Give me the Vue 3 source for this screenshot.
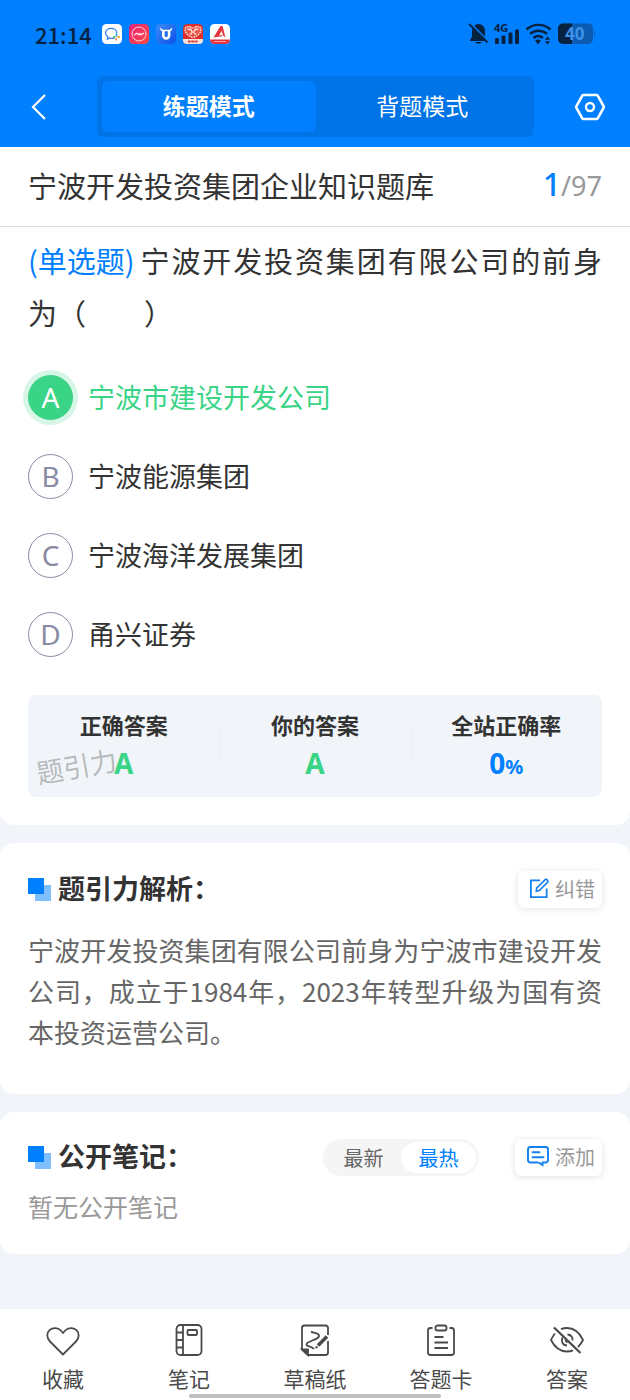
<script setup>
import { ref } from 'vue'

const mode = ref('practice')
const chosen = ref('A')
const sort = ref('hot')
const options = [
  { key: 'A', text: '宁波市建设开发公司' },
  { key: 'B', text: '宁波能源集团' },
  { key: 'C', text: '宁波海洋发展集团' },
  { key: 'D', text: '甬兴证券' },
]
</script>

<template>
  <div class="app">
    <header class="header">
      <div class="status">
        <time class="clock">21:14</time>
        <div class="apps">
          <svg viewBox="0 0 20 20" class="app-icon">
            <rect width="20" height="20" rx="4.5" fill="#fff" />
            <path d="M12.6 13.6c-1.4.8-3.3.9-4.8.4l-2.4 1.1.5-2.1C4.200 11.800 3.400 10.500 3.500 9c.2-2.700 2.600-4.600 5.600-4.600 3.200 0 5.700 2 5.800 4.700" fill="none" stroke="#2b7cf0" stroke-width="1.300" />
            <path d="M14.500 9.800v2.200" stroke="#39a8f5" stroke-width="1.700" stroke-linecap="round" />
            <path d="M16 12.800l1 .4" stroke="#f5a623" stroke-width="1.900" stroke-linecap="round" />
            <path d="M14.200 15v.6" stroke="#f0642b" stroke-width="1.700" stroke-linecap="round" />
            <path d="M11.800 12.900l.9.2" stroke="#42c04a" stroke-width="1.700" stroke-linecap="round" />
          </svg>
          <svg viewBox="0 0 20 20" class="app-icon">
            <defs>
              <linearGradient id="pink" x1="0" y1="0" x2="1" y2="1">
                <stop offset="0" stop-color="#e6257d" />
                <stop offset="1" stop-color="#ff4a3f" />
              </linearGradient>
            </defs>
            <rect width="20" height="20" rx="4.500" fill="url(#pink)" />
            <circle cx="10" cy="10" r="7" fill="none" stroke="#ffd6dc" stroke-width="1" />
            <path d="M5.500 11.200c1-2 2.600-2.200 3.600-1.200s1.500 1 2.100-.2l.6 1.100 3-1.900" fill="none" stroke="#fff" stroke-width="1.200" />
          </svg>
          <svg viewBox="0 0 20 20" class="app-icon">
            <defs>
              <linearGradient id="azure" x1="0" y1="0" x2="1" y2="1">
                <stop offset="0" stop-color="#3d8df8" />
                <stop offset="1" stop-color="#0a50e8" />
              </linearGradient>
            </defs>
            <rect width="20" height="20" rx="4.500" fill="url(#azure)" />
            <path d="M7.300 7v4.500a2.900 2.900 0 0 0 5.800 0V7" fill="none" stroke="#fff" stroke-width="2.600" />
            <path d="M4.800 4.200c0 1.500.8 2.300 2.500 2.300h5.800c1.700 0 2.400-.8 2.400-2.300" fill="none" stroke="#fff" stroke-width="1.500" />
          </svg>
          <svg viewBox="0 0 20 20" class="app-icon">
            <rect width="20" height="20" rx="4.500" fill="#dc2e2b" />
            <path d="M0 15h20v1a4 4 0 0 1-4 4H4a4 4 0 0 1-4-4z" fill="#fbe3dc" />
            <path d="M9.500 13.500C4.500 11.500 1.800 8.500 2 5.500 2.300 2.200 6.500 1.200 9.500 4.200M10.500 13.500c5-2 7.700-5 7.500-8-.3-3.300-4.500-4.300-7.500-1.300" fill="#e9594f" stroke="#ffe2d2" stroke-width="1.400" stroke-dasharray="1.800 .7" />
            <path d="M4.500 5.500c2-1 4 0 4.500 2s-1 3-2 2M15.500 5.500c-2-1-4 0-4.500 2s1 3 2 2" fill="none" stroke="#fff0e6" stroke-width="1.300" />
            <path d="M5 17.500h10" stroke="#d84238" stroke-width="2.200" stroke-dasharray="2.800 .5" />
          </svg>
          <svg viewBox="0 0 20 20" class="app-icon">
            <rect width="20" height="20" rx="4.500" fill="#fff" />
            <path d="M0 15.500h20a4.500 4.500 0 0 1-4.500 4.500h-11A4.500 4.500 0 0 1 0 15.500z" fill="#e5343d" />
            <path d="M3.500 13.500L10.500 2h2L15.500 13.500l-2.700-2.300-.9-4.500-3 4.700 3.500-.3-1 1.500-3.600.1z" fill="#e5343d" />
            <path d="M4 17.500h12" stroke="#ffb5b8" stroke-width="1" stroke-dasharray="1.600 .4" />
          </svg>
        </div>
        <svg class="system" viewBox="0 -4 128 32" role="img" aria-label="静音 4G 无线网络 电量40">
          <g fill="#06223f">
            <path d="M10.500 2a6.500 6.500 0 0 0-6.500 6.500v6L2 18v1h17v-1l-2-3.500v-6A6.500 6.500 0 0 0 10.500 2zM7 20h7a3.600 2.300 0 0 1-7 0z" />
            <path d="M2.500 1.500l18 18" stroke="#007fff" stroke-width="1.800" />
            <path d="M1 2l18.500 18.500" stroke="#06223f" stroke-width="1.800" />
            <rect x="27" y="16" width="4" height="6" rx="1.200" />
            <rect x="33.500" y="13.500" width="4" height="8.500" rx="1.200" />
            <rect x="40.500" y="10.500" width="4" height="11.500" rx="1.200" />
            <rect x="47" y="7.500" width="4" height="14.500" rx="1.200" />
            <text x="26" y="10" class="net">4G</text>
            <path d="M67 18.500q3-1.800 6 0L70 22.500z" />
            <path d="M79.500 14.500l2.700 3.300h-5.400zM79.500 22.500l2.700-3.300h-5.400z" />
          </g>
          <path d="M58.500 7.500c6.800-6.200 17.200-6.200 24 0M62 11.900c4.900-4.300 12.100-4.300 17 0M65.500 16c2.900-2.400 6.400-2.400 9.500 0" fill="none" stroke="#06223f" stroke-width="2.400" />
          <rect x="90" y="1.500" width="35" height="20.500" rx="5" fill="#0a5bb1" />
          <path d="M95 1.500h9V22h-9a5 5 0 0 1-5-5V6.500a5 5 0 0 1 5-5z" fill="#06223f" />
          <path d="M126 8q2 3.700 0 7.500z" fill="#0a5bb1" />
          <text x="97" y="18" class="charge">40</text>
        </svg>
      </div>
      <nav class="topbar">
        <button class="icon-btn back" type="button" aria-label="返回">
          <svg viewBox="0 0 16 28"><path d="M14 2L2 14l12 12" fill="none" stroke="#fff" stroke-width="2.200" /></svg>
        </button>
        <div class="tabs">
          <button type="button" class="tab" :class="{ on: mode === 'practice' }" @click="mode = 'practice'">练题模式</button>
          <button type="button" class="tab" :class="{ on: mode === 'recite' }" @click="mode = 'recite'">背题模式</button>
        </div>
        <button class="icon-btn settings" type="button" aria-label="设置">
          <svg viewBox="0 0 32 28">
            <path d="M9.500 2h13q.8 0 1.200.7l6 10.600q.4.700 0 1.400l-6 10.600q-.4.700-1.200.7h-13q-.8 0-1.200-.7l-6-10.600q-.4-.7 0-1.400l6-10.600q.4-.7 1.200-.7z" fill="none" stroke="#fff" stroke-width="2.600" />
            <circle cx="16" cy="14" r="4" fill="none" stroke="#fff" stroke-width="2.400" />
          </svg>
        </button>
      </nav>
    </header>

    <main class="main">
      <section class="card first">
        <div class="title-row">
          <h1>宁波开发投资集团企业知识题库</h1>
          <p class="progress"><b>1</b>/97</p>
        </div>
        <div class="body">
          <p class="question"><span class="kind">(单选题)</span>宁波开发投资集团有限公司的前身为（　　）</p>
          <div class="options" role="radiogroup">
            <label v-for="o in options" :key="o.key" class="option" :class="{ right: chosen === o.key }">
              <input v-model="chosen" type="radio" name="answer" :value="o.key" />
              <span class="letter">{{ o.key }}</span>
              <span class="choice">{{ o.text }}</span>
            </label>
          </div>
          <dl class="stats">
            <div class="stat"><dt>正确答案</dt><dd>A</dd></div>
            <div class="stat"><dt>你的答案</dt><dd>{{ chosen }}</dd></div>
            <div class="stat"><dt>全站正确率</dt><dd class="rate">0<small>%</small></dd></div>
            <div class="watermark">题引力</div>
          </dl>
        </div>
      </section>

      <section class="card analysis">
        <div class="head">
          <h2><i class="mark"></i>题引力解析：</h2>
          <button type="button" class="chip">
            <svg viewBox="0 0 22 22">
              <path d="M11.500 3H2v17.500h16.500v-9" fill="none" stroke="#1481ee" stroke-width="1.900" />
              <path d="M17 2.200q.8-.8 1.600 0l1 1q.8.8 0 1.600l-8.800 8.900-3.200.6.500-3.300z" fill="none" stroke="#1481ee" stroke-width="1.700" />
            </svg>
            纠错
          </button>
        </div>
        <p class="explain">宁波开发投资集团有限公司前身为宁波市建设开发公司，成立于1984年，2023年转型升级为国有资本投资运营公司。</p>
      </section>

      <section class="card notes">
        <div class="head">
          <h2><i class="mark"></i>公开笔记：</h2>
          <div class="tools">
            <div class="sort">
              <button type="button" :class="{ on: sort === 'new' }" @click="sort = 'new'">最新</button>
              <button type="button" :class="{ on: sort === 'hot' }" @click="sort = 'hot'">最热</button>
            </div>
            <button type="button" class="chip">
              <svg class="wide" viewBox="0 0 24 22">
                <path d="M12.500 17.500H4.500q-2.500 0-2.500-2.500V4.500Q2 2 4.500 2h15Q22 2 22 4.500V15q0 2.500-2.500 2.500h-3V20l-4-2.500" fill="none" stroke="#1481ee" stroke-width="1.900" />
                <path d="M6.500 7.200h7M6.500 12.200h11" stroke="#1481ee" stroke-width="1.900" stroke-linecap="round" />
              </svg>
              添加
            </button>
          </div>
        </div>
        <p class="empty">暂无公开笔记</p>
      </section>
    </main>

    <nav class="bottom">
      <button type="button">
        <svg viewBox="0 0 34 34"><path d="M17 31.500L4 18.500C.5 15 .5 10 3.500 7.200c3.200-3 8.500-2.700 11.300.3L17 10l2.200-2.500c2.800-3 8.100-3.300 11.300-.3 3 2.800 3 7.800-.5 11.300z" /></svg>
        收藏
      </button>
      <button type="button">
        <svg viewBox="0 0 34 34">
          <rect x="4.500" y="2" width="25" height="30" rx="4" />
          <path d="M11 2v30M4.500 9.500H11M4.500 17H11M4.500 24.500H11" />
          <rect x="15.500" y="7" width="9.500" height="5" rx="1" />
        </svg>
        笔记
      </button>
      <button type="button">
        <svg viewBox="0 0 34 34">
          <path d="M30 12V5q0-2.500-2.500-2.500h-21Q4 2.500 4 5v21.500l6 5.500h17.500q2.500 0 2.500-2.500V18" />
          <path d="M4 26.500h6V32z" fill="#4a4a4a" />
          <path d="M13 8.500c3 2.500 8.500 1 8 4.500-.6 4.500-12.500 4.500-12.500 8.500 0 2.500 5 1 7.500 4.500" />
          <path d="M20 22.500l9-9" stroke-width="3.600" />
          <path d="M17.500 25l2-1.500" />
        </svg>
        草稿纸
      </button>
      <button type="button">
        <svg viewBox="0 0 34 34">
          <path d="M8.500 5H6.500Q4 5 4 7.500v22Q4 32 6.500 32h21q2.500 0 2.500-2.500v-22Q30 5 27.500 5h-2" />
          <rect x="11.500" y="2.500" width="11" height="5" rx="2" />
          <path d="M10.500 14h9M10.500 19.500h13.500M10.500 25h13.500" />
        </svg>
        答题卡
      </button>
      <button type="button">
        <svg viewBox="0 0 34 34">
          <path d="M5 10.500Q2.500 13.500 1 17C4.500 24 10.500 28.500 17 28.500q3 0 6-1.200M11 6.200Q14 5 17 5c6.500 0 12.500 4.500 16 12q-2 4-5 7" />
          <path d="M12.500 14.500c-2 4 .5 8 4.500 8M17.500 11.500c3.500 0 5.500 3 5 6M15.500 17q.3 2 2 2.500" />
          <path d="M4 4.500L30.500 30" stroke-width="2.300" />
        </svg>
        答案
      </button>
      <span class="home-bar"></span>
    </nav>
  </div>
</template>

<style>
body {
  margin: 0;
  background: #f1f5f9;
}
</style>

<style scoped>
* {
  box-sizing: border-box;
}
.app {
  display: flex;
  flex-direction: column;
  min-height: 100vh;
  background: #f1f5f9;
  color: #333;
  font-family: "Noto Sans CJK SC", sans-serif;
}
h1, h2, p, dl, dd {
  margin: 0;
}
button {
  padding: 0;
  border: 0;
  background: none;
  font-family: inherit;
  color: inherit;
  cursor: pointer;
}
svg {
  display: block;
}

.header {
  background: #007fff;
  padding-bottom: 10px;
}
.status {
  display: flex;
  align-items: center;
  height: 76px;
  padding: 0 34px 8px 35px;
}
.clock {
  font-size: 22px;
  font-weight: 500;
  color: #06223f;
}
.apps {
  display: flex;
  gap: 7px;
  margin-left: 10px;
}
.app-icon {
  width: 20px;
  height: 20px;
}
.system {
  width: 128px;
  height: 32px;
  margin-left: auto;
}
.net {
  font: 700 11px "Noto Sans", sans-serif;
}
.charge {
  font: 700 17px "Noto Sans", sans-serif;
  fill: #3e92e8;
}
.topbar {
  display: grid;
  grid-template-columns: 97px 1fr 96px;
  align-items: center;
}
.icon-btn {
  display: flex;
  height: 44px;
  align-items: center;
}
.back {
  padding-left: 31px;
}
.back svg {
  width: 16px;
  height: 28px;
}
.settings {
  justify-content: flex-end;
  padding-right: 24px;
}
.settings svg {
  width: 32px;
  height: 28px;
}
.tabs {
  display: flex;
  height: 61px;
  padding: 5px;
  border-radius: 6px;
  background: #0073e6;
}
.tab {
  flex: 1;
  padding-bottom: 3px;
  border-radius: 6px;
  font-size: 23px;
  color: #fff;
}
.tab.on {
  background: #007fff;
  font-weight: 700;
}

.main {
  display: flex;
  flex-direction: column;
  gap: 18px;
}
.card {
  background: #fff;
  border-radius: 14px;
}
.card.first {
  border-radius: 0 0 14px 14px;
}
.title-row {
  display: flex;
  align-items: center;
  justify-content: space-between;
  height: 80px;
  padding: 0 28px 3px;
  border-bottom: 1px solid #ddd;
}
h1 {
  font-size: 29px;
  font-weight: 400;
}
.progress {
  font-family: "Noto Sans", sans-serif;
  font-size: 27px;
  line-height: 40px;
  color: #999;
}
.progress b {
  font-size: 32px;
  font-weight: 500;
  color: #007fff;
}
.body {
  padding: 7px 28px 28px;
}
.question {
  font-size: 29px;
  line-height: 52px;
  text-align: justify;
}
.kind {
  display: inline-block;
  margin-right: 4px;
  color: #007fff;
}
.options {
  margin: 20px 0 21px;
}
.option {
  display: flex;
  align-items: center;
  gap: 15px;
  height: 79px;
  font-size: 27px;
  cursor: pointer;
}
.option input {
  position: absolute;
  opacity: 0;
}
.letter {
  display: flex;
  align-items: center;
  justify-content: center;
  width: 45px;
  height: 45px;
  padding-bottom: 2px;
  border: 1px solid #8a8ba3;
  border-radius: 50%;
  font-family: "Noto Sans", sans-serif;
  font-size: 28px;
  color: #8a8ba3;
}
.choice {
  padding-bottom: 3px;
}
.right {
  color: #3ad486;
}
.right .letter {
  border-color: #3ad486;
  background: #3ad486;
  box-shadow: 0 0 0 5px #d8f6e7;
  color: #fff;
}
.stats {
  position: relative;
  display: grid;
  grid-template-columns: repeat(3, 1fr);
  padding: 9px 0 13px;
  border-radius: 8px;
  background: #f1f5f9;
  text-align: center;
}
.stat {
  height: 80px;
}
.stat + .stat {
  background: linear-gradient(#e8edf2, #e8edf2) left center / 1px 36px no-repeat;
}
dt {
  margin-bottom: 1px;
  font-size: 22px;
  font-weight: 700;
  line-height: 40px;
}
dd {
  font-family: "Noto Sans", sans-serif;
  font-size: 28px;
  font-weight: 700;
  line-height: 36px;
  color: #3ad486;
}
dd.rate {
  color: #007fff;
}
dd small {
  font-size: 20px;
}
.watermark {
  position: absolute;
  left: 8px;
  top: 51px;
  font-size: 27px;
  line-height: 40px;
  color: rgba(90, 90, 90, 0.4);
  transform: rotate(-10deg);
}

.analysis {
  padding: 26px 28px 42px;
}
.notes {
  padding: 25px 28px 28px;
}
.head {
  display: flex;
  align-items: center;
  justify-content: space-between;
  height: 40px;
}
h2 {
  display: flex;
  align-items: center;
  gap: 7px;
  margin-bottom: 3px;
  font-size: 27px;
  font-weight: 700;
}
.mark {
  width: 23px;
  height: 23px;
  margin-top: 3px;
  background:
    linear-gradient(#007fff, #007fff) left top / 16px 16px no-repeat,
    linear-gradient(#80bfff, #80bfff) right bottom / 16px 16px no-repeat;
}
.chip {
  display: flex;
  align-items: center;
  gap: 5px;
  height: 37px;
  padding: 0 7px 2px 11px;
  border-radius: 6px;
  background: #fff;
  box-shadow: 0 1px 6px rgba(0, 0, 0, 0.12);
  font-size: 20px;
  color: #999;
}
.chip svg {
  width: 21px;
  height: 22px;
}
.chip .wide {
  width: 24px;
}
.tools {
  display: flex;
  gap: 36px;
}
.sort {
  display: flex;
  height: 37px;
  padding: 3px;
  border-radius: 19px;
  background: #f5f5f5;
}
.sort button {
  width: 75px;
  border-radius: 16px;
  font-size: 20px;
  color: #666;
}
.sort .on {
  background: #fff;
  color: #007fff;
}
.explain {
  margin-top: 20px;
  font-size: 26px;
  line-height: 41px;
  color: #666;
  text-align: justify;
}
.empty {
  margin-top: 9px;
  font-size: 25px;
  line-height: 40px;
  color: #999;
}

.bottom {
  position: relative;
  display: grid;
  grid-template-columns: repeat(5, 1fr);
  height: 91px;
  margin-top: auto;
  background: #fff;
}
.bottom button {
  display: flex;
  flex-direction: column;
  align-items: center;
  gap: 6px;
  padding-top: 14px;
  font-size: 21px;
  line-height: 30px;
  color: #4a4a4a;
}
.bottom svg {
  width: 34px;
  height: 34px;
  fill: none;
  stroke: #4a4a4a;
  stroke-width: 1.800;
}
.home-bar {
  position: absolute;
  left: 30%;
  right: 30%;
  bottom: 2px;
  height: 4px;
  border-radius: 2px;
  background: #bfbfbf;
}
</style>
